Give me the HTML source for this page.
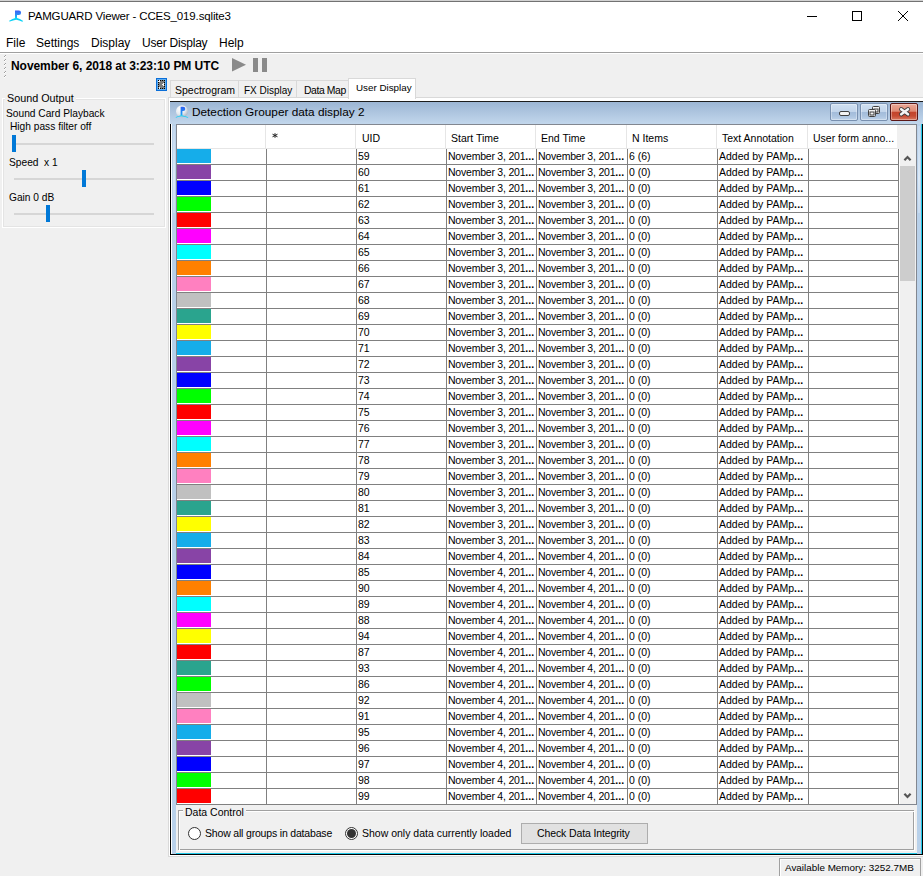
<!DOCTYPE html>
<html><head><meta charset="utf-8">
<style>
*{box-sizing:border-box;margin:0;padding:0}
html,body{width:923px;height:876px;overflow:hidden;background:#f0f0f0;font-family:"Liberation Sans",sans-serif;color:#000}
.a{position:absolute}
.t{position:absolute;white-space:nowrap;line-height:1}
#titlebar{left:0;top:0;width:923px;height:52px;background:#fff}
#menuline{left:0;top:52px;width:923px;height:1px;background:#a0a0a0}
.menu{font-size:12px;top:37px}
.ttl{font-size:11.5px}
.lp{font-size:10.2px}
.track{position:absolute;height:2px;background:#d6d6d6}
.thumb{position:absolute;width:4px;height:17px;background:#0078d7}
.tab{position:absolute;top:80px;height:18px;border:1px solid #d9d9d9;border-bottom:none;background:#f0f0f0;font-size:10.5px}
.tab span{position:absolute;top:4px;white-space:nowrap;line-height:1}
.btn{position:absolute;top:103px;width:28px;height:18px;border:1px solid #7890b0;border-radius:2px;box-shadow:inset 0 0 0 1px rgba(255,255,255,.35)}
.hs{position:absolute;top:125px;width:1px;height:23px;background:#e6e6e6}
.hd{font-size:10.5px;top:133px;margin-left:-1px}
#grid{border-collapse:separate;border-spacing:0;table-layout:fixed;width:722px;font-size:10.5px}
#grid td{height:16px;border-right:1px solid #808080;border-bottom:1px solid #808080;padding:0 0 0 1px;white-space:nowrap;overflow:hidden;line-height:15px;vertical-align:top;box-sizing:border-box}
#grid td i{display:block;width:34px;height:14px}
#grid td:first-child{padding:0}
#grid b{letter-spacing:0.1px}
#grid td:nth-child(4),#grid td:nth-child(5){letter-spacing:-0.22px}
.dc{font-size:10.5px}
.radio{width:13px;height:13px;border-radius:50%;border:1px solid #333;background:#fff}
</style></head><body>

<!-- title bar + menu -->
<div class="a" id="titlebar"></div>
<div class="a" style="left:0;top:0;width:923px;height:1px;background:#d2d2d2"></div>
<div class="a" style="left:0;top:1px;width:923px;height:1px;background:#727272"></div>
<svg class="a" style="left:5px;top:5px" width="22" height="22" viewBox="0 0 22 22">
  <defs><linearGradient id="pg" x1="0" y1="0" x2="0" y2="1"><stop offset="0" stop-color="#3a5ef6"/><stop offset=".55" stop-color="#2f8cf4"/><stop offset="1" stop-color="#08d6f6"/></linearGradient></defs>
  <path d="M10 5.4h3.8a2.3 2.3 0 0 1 0 4.6H12V13.2H10z" fill="url(#pg)"/>
  <path d="M3.8 15.9C6.5 14.6 8.6 13.6 10.4 13.1h1.6C13.8 13.6 16 14.6 18.2 15.9l-.9.8C15.2 15.8 13.2 15.1 11.2 14.7 9.2 15.1 7.2 15.8 4.8 16.6z" fill="#0ad2f6"/>
</svg>
<div class="t ttl" id="title" style="left:28px;top:11px;letter-spacing:-0.15px">PAMGUARD Viewer - CCES_019.sqlite3</div>
<div class="a" style="left:807px;top:16px;width:10px;height:1px;background:#000"></div>
<div class="a" style="left:852px;top:11px;width:10px;height:10px;border:1px solid #000"></div>
<svg class="a" style="left:897px;top:10px" width="12" height="12" viewBox="0 0 12 12"><path d="M1 1L11 11M11 1L1 11" stroke="#000" stroke-width="1"/></svg>

<div class="t menu" id="m1" style="left:6px">File</div>
<div class="t menu" id="m2" style="left:36px">Settings</div>
<div class="t menu" id="m3" style="left:91px">Display</div>
<div class="t menu" id="m4" style="left:142px;letter-spacing:-0.22px">User Display</div>
<div class="t menu" id="m5" style="left:219px">Help</div>
<div class="a" id="menuline"></div><div class="a" style="left:0;top:53px;width:923px;height:1px;background:#fff"></div>

<!-- toolbar -->
<svg class="a" style="left:3px;top:55px" width="4" height="24" shape-rendering="crispEdges"><rect x="2" y="0" width="1" height="1" fill="#a0a0a0"/><rect x="1" y="1" width="1" height="1" fill="#a0a0a0"/><rect x="2" y="1" width="1" height="1" fill="#fff"/><rect x="1" y="2" width="1" height="1" fill="#fff"/><rect x="2" y="4" width="1" height="1" fill="#a0a0a0"/><rect x="1" y="5" width="1" height="1" fill="#a0a0a0"/><rect x="2" y="5" width="1" height="1" fill="#fff"/><rect x="1" y="6" width="1" height="1" fill="#fff"/><rect x="2" y="8" width="1" height="1" fill="#a0a0a0"/><rect x="1" y="9" width="1" height="1" fill="#a0a0a0"/><rect x="2" y="9" width="1" height="1" fill="#fff"/><rect x="1" y="10" width="1" height="1" fill="#fff"/><rect x="2" y="12" width="1" height="1" fill="#a0a0a0"/><rect x="1" y="13" width="1" height="1" fill="#a0a0a0"/><rect x="2" y="13" width="1" height="1" fill="#fff"/><rect x="1" y="14" width="1" height="1" fill="#fff"/><rect x="2" y="16" width="1" height="1" fill="#a0a0a0"/><rect x="1" y="17" width="1" height="1" fill="#a0a0a0"/><rect x="2" y="17" width="1" height="1" fill="#fff"/><rect x="1" y="18" width="1" height="1" fill="#fff"/><rect x="2" y="20" width="1" height="1" fill="#a0a0a0"/><rect x="1" y="21" width="1" height="1" fill="#a0a0a0"/><rect x="2" y="21" width="1" height="1" fill="#fff"/><rect x="1" y="22" width="1" height="1" fill="#fff"/></svg>
<div class="t" id="date" style="left:11px;top:60px;font-size:12px;font-weight:bold;letter-spacing:-0.06px">November 6, 2018 at 3:23:10 PM UTC</div>
<svg class="a" style="left:231px;top:58px" width="38" height="14">
  <path d="M1 0L15 6.7L1 13.5z" fill="#8a8a8a"/>
  <rect x="22" y="0" width="5" height="14" fill="#8a8a8a"/>
  <rect x="31" y="0" width="5" height="14" fill="#8a8a8a"/>
</svg>

<!-- one touch expandable icon -->
<svg class="a" style="left:156px;top:78px" width="11" height="13" shape-rendering="crispEdges">
  <rect x="0" y="0" width="11" height="13" fill="#0a6ed8"/>
  <rect x="1" y="1" width="9" height="11" fill="#60aef2"/>
  <rect x="2" y="2" width="7" height="9" fill="#7c7c7c"/>
  <rect x="3" y="2" width="1" height="2" fill="#f4f4f4"/><rect x="2" y="3" width="1" height="1" fill="#f4f4f4"/>
  <rect x="3" y="9" width="1" height="2" fill="#f4f4f4"/>
  <path d="M8 5L6 6.5 8 8z" fill="#f8f8f8"/>
  <g fill="#000"><rect x="2" y="2" width="1" height="1"/><rect x="2" y="10" width="1" height="1"/><rect x="4" y="2" width="1" height="1"/><rect x="4" y="10" width="1" height="1"/><rect x="6" y="2" width="1" height="1"/><rect x="6" y="10" width="1" height="1"/><rect x="8" y="2" width="1" height="1"/><rect x="8" y="10" width="1" height="1"/><rect x="2" y="4" width="1" height="1"/><rect x="2" y="6" width="1" height="1"/><rect x="2" y="8" width="1" height="1"/><rect x="8" y="4" width="1" height="1"/><rect x="8" y="6" width="1" height="1"/><rect x="8" y="8" width="1" height="1"/></g>
</svg>
<!-- left panel: Sound Output -->
<div class="a" style="left:2px;top:98px;width:164px;height:130px;border:1px solid #fff"></div>
<div class="a" style="left:3px;top:99px;width:162px;height:128px;border:1px solid #e4e4e4"></div>
<div class="t lp" id="so" style="left:5px;top:93px;font-size:10.8px;background:#f0f0f0;padding:0 2px">Sound Output</div>
<div class="t lp" style="left:6px;top:109px">Sound Card Playback</div>
<div class="t lp" style="left:10px;top:122px">High pass filter off</div>
<div class="track" style="left:14px;top:143px;width:140px"></div>
<div class="thumb" style="left:12px;top:135px"></div>
<div class="t lp" style="left:9px;top:158px">Speed&nbsp; x 1</div>
<div class="track" style="left:14px;top:178px;width:140px"></div>
<div class="thumb" style="left:82px;top:170px"></div>
<div class="t lp" style="left:9px;top:193px">Gain 0 dB</div>
<div class="track" style="left:14px;top:213px;width:140px"></div>
<div class="thumb" style="left:46px;top:205px"></div>

<!-- tabs -->
<div class="tab" style="left:170px;width:69px"><span style="left:4px">Spectrogram</span></div>
<div class="tab" style="left:238px;width:59px"><span style="left:5px;font-size:10px;top:5px">FX Display</span></div>
<div class="tab" style="left:296px;width:53px"><span style="left:7px;font-size:10.4px;top:5px;letter-spacing:-0.4px">Data Map</span></div>
<!-- tab content area -->
<div class="a" style="left:168px;top:97px;width:760px;height:760px;border:1px solid #d9d9d9;background:#fff"></div>
<div class="tab" style="left:348px;top:78px;width:68px;height:21px;background:#fff"><span style="left:7px;top:4px;font-size:9.8px">User Display</span></div>


<!-- internal frame -->
<div class="a" style="left:170px;top:101px;width:753px;height:1px;background:#1c1c1c"></div>
<div class="a" style="left:170px;top:102px;width:753px;height:22px;background:linear-gradient(#9cb6d4,#c2d7ec)"></div>
<div class="a" style="left:170px;top:124px;width:1px;height:731px;background:#000"></div>
<div class="a" style="left:171px;top:124px;width:1px;height:730px;background:#fff"></div>
<div class="a" style="left:172px;top:124px;width:4px;height:730px;background:#b9d1ea"></div><div class="a" style="left:173px;top:126px;width:2px;height:87px;background:linear-gradient(#c4d8ee,#dce9f6 60%,#c9dbef)"></div>
<div class="a" style="left:171px;top:854px;width:752px;height:1px;background:#000"></div>
<div class="a" style="left:176px;top:853px;width:746px;height:1px;background:#1ec8e8"></div>
<div class="a" style="left:922px;top:124px;width:1px;height:731px;background:#000"></div>
<div class="a" style="left:921px;top:124px;width:1px;height:730px;background:#1ec8e8"></div>
<div class="a" style="left:917px;top:124px;width:4px;height:730px;background:#b9d1ea"></div><div class="a" style="left:918px;top:126px;width:2px;height:87px;background:linear-gradient(#c4d8ee,#dce9f6 60%,#c9dbef)"></div>
<div class="a" style="left:176px;top:124px;width:741px;height:729px;background:#f0f0f0"></div>
<svg class="a" style="left:175px;top:105px" width="14" height="13" viewBox="0 0 14 13">
  <defs><radialGradient id="sph" cx=".35" cy=".3" r=".75"><stop offset="0" stop-color="#ffffff"/><stop offset=".6" stop-color="#e4e9ef"/><stop offset="1" stop-color="#aab6c4"/></radialGradient>
  <linearGradient id="pg2" x1="0" y1="0" x2="0" y2="1"><stop offset="0" stop-color="#2f5ff2"/><stop offset="1" stop-color="#1aa8f4"/></linearGradient></defs>
  <circle cx="7" cy="6.3" r="6" fill="url(#sph)"/>
  <path d="M5.6 1.8h2.6a2.1 2.1 0 0 1 0 4.2H7.4V10.6H5.6z" fill="url(#pg2)"/>
  <path d="M0.6 12.2C3 11.2 5 10.4 6.5 10.2 8 10.4 10.5 11.2 13.4 12.2l-.6.6C10.5 12 8.5 11.5 6.5 11.3 4.5 11.5 2.5 12 1 12.8z" fill="#0bd0f8"/>
</svg>
<div class="t" id="ftitle" style="left:192px;top:107px;font-size:11.8px;color:#000">Detection Grouper data display 2</div>
<div class="btn" style="left:830px;background:linear-gradient(#d0e0f2 0,#c2d5eb 48%,#a3bcda 52%,#abc3df 75%,#bfd3ea 100%)"><div class="a" style="left:8px;top:7px;width:11px;height:5px;border:1px solid #404040;background:#f4f4f4;border-radius:2px"></div></div>
<div class="btn" style="left:860px;background:linear-gradient(#d0e0f2 0,#c2d5eb 48%,#a3bcda 52%,#abc3df 75%,#bfd3ea 100%)">
  <svg class="a" style="left:6px;top:1px" width="14" height="14" viewBox="0 0 14 14">
    <rect x="5.5" y="1.5" width="7" height="7" rx="1" fill="#f4f4f4" stroke="#404040"/>
    <rect x="7" y="4" width="4" height="3" fill="none" stroke="#404040"/>
    <rect x="1.5" y="4.5" width="7" height="7" rx="1" fill="#f4f4f4" stroke="#404040"/>
    <rect x="3" y="7" width="4" height="3" fill="none" stroke="#404040"/>
  </svg>
</div>
<div class="btn" style="left:890px;border-color:#5a1616;background:linear-gradient(#eaa897 0,#df8a74 45%,#c3442c 52%,#c64b33 75%,#d97b63 100%)">
  <svg class="a" style="left:7px;top:2px" width="14" height="12" viewBox="0 0 14 12"><path d="M3.2 3.2L10 8.3M10 3.2L3.2 8.3" stroke="#3a3a3a" stroke-width="4.2" stroke-linecap="round"/><path d="M3.2 3.2L10 8.3M10 3.2L3.2 8.3" stroke="#f4f4f4" stroke-width="2.6" stroke-linecap="round"/></svg>
</div>

<!-- table -->
<div class="a" style="left:176px;top:124px;width:741px;height:681px;border:1px solid #828790;background:#fff"></div>
<div class="a" id="hdr" style="left:177px;top:125px;width:720px;height:24px;background:#fff;border-bottom:1px solid #e6e6e6"></div>
<div class="a" style="left:897px;top:125px;width:19px;height:24px;background:#f0f0f0"></div>
<div class="hs" style="left:265px"></div><div class="hs" style="left:355px"></div><div class="hs" style="left:445px"></div><div class="hs" style="left:535px"></div><div class="hs" style="left:626px"></div><div class="hs" style="left:716px"></div><div class="hs" style="left:807px"></div>
<svg class="a" style="left:271px;top:132px" width="8" height="7" viewBox="0 0 8 7"><path d="M4 1.2V5.8M1.5 2.2L6.5 4.8M1.5 4.8L6.5 2.2" stroke="#222" stroke-width="1"/></svg>
<div class="t hd" id="h3" style="left:363px">UID</div>
<div class="t hd" id="h4" style="left:452px">Start Time</div>
<div class="t hd" id="h5" style="left:542px">End Time</div>
<div class="t hd" id="h6" style="left:633px">N Items</div>
<div class="t hd" id="h7" style="left:723px">Text Annotation</div>
<div class="t hd" id="h8" style="left:814px">User form anno...</div>
<table id="grid" class="a" style="left:177px;top:149px">
<colgroup><col style="width:90px"><col style="width:90px"><col style="width:90px"><col style="width:90px"><col style="width:91px"><col style="width:90px"><col style="width:91px"><col style="width:90px"></colgroup>
<tr><td><i style="background:#15adea"></i></td><td></td><td>59</td><td>November 3, 201<b>...</b></td><td>November 3, 201<b>...</b></td><td>6 (6)</td><td>Added by PAMp<b>...</b></td><td></td></tr>
<tr><td><i style="background:#8844a6"></i></td><td></td><td>60</td><td>November 3, 201<b>...</b></td><td>November 3, 201<b>...</b></td><td>0 (0)</td><td>Added by PAMp<b>...</b></td><td></td></tr>
<tr><td><i style="background:#0000ff"></i></td><td></td><td>61</td><td>November 3, 201<b>...</b></td><td>November 3, 201<b>...</b></td><td>0 (0)</td><td>Added by PAMp<b>...</b></td><td></td></tr>
<tr><td><i style="background:#00ff00"></i></td><td></td><td>62</td><td>November 3, 201<b>...</b></td><td>November 3, 201<b>...</b></td><td>0 (0)</td><td>Added by PAMp<b>...</b></td><td></td></tr>
<tr><td><i style="background:#ff0000"></i></td><td></td><td>63</td><td>November 3, 201<b>...</b></td><td>November 3, 201<b>...</b></td><td>0 (0)</td><td>Added by PAMp<b>...</b></td><td></td></tr>
<tr><td><i style="background:#ff00ff"></i></td><td></td><td>64</td><td>November 3, 201<b>...</b></td><td>November 3, 201<b>...</b></td><td>0 (0)</td><td>Added by PAMp<b>...</b></td><td></td></tr>
<tr><td><i style="background:#00ffff"></i></td><td></td><td>65</td><td>November 3, 201<b>...</b></td><td>November 3, 201<b>...</b></td><td>0 (0)</td><td>Added by PAMp<b>...</b></td><td></td></tr>
<tr><td><i style="background:#ff8000"></i></td><td></td><td>66</td><td>November 3, 201<b>...</b></td><td>November 3, 201<b>...</b></td><td>0 (0)</td><td>Added by PAMp<b>...</b></td><td></td></tr>
<tr><td><i style="background:#ff80c0"></i></td><td></td><td>67</td><td>November 3, 201<b>...</b></td><td>November 3, 201<b>...</b></td><td>0 (0)</td><td>Added by PAMp<b>...</b></td><td></td></tr>
<tr><td><i style="background:#c0c0c0"></i></td><td></td><td>68</td><td>November 3, 201<b>...</b></td><td>November 3, 201<b>...</b></td><td>0 (0)</td><td>Added by PAMp<b>...</b></td><td></td></tr>
<tr><td><i style="background:#2aa48e"></i></td><td></td><td>69</td><td>November 3, 201<b>...</b></td><td>November 3, 201<b>...</b></td><td>0 (0)</td><td>Added by PAMp<b>...</b></td><td></td></tr>
<tr><td><i style="background:#ffff00"></i></td><td></td><td>70</td><td>November 3, 201<b>...</b></td><td>November 3, 201<b>...</b></td><td>0 (0)</td><td>Added by PAMp<b>...</b></td><td></td></tr>
<tr><td><i style="background:#15adea"></i></td><td></td><td>71</td><td>November 3, 201<b>...</b></td><td>November 3, 201<b>...</b></td><td>0 (0)</td><td>Added by PAMp<b>...</b></td><td></td></tr>
<tr><td><i style="background:#8844a6"></i></td><td></td><td>72</td><td>November 3, 201<b>...</b></td><td>November 3, 201<b>...</b></td><td>0 (0)</td><td>Added by PAMp<b>...</b></td><td></td></tr>
<tr><td><i style="background:#0000ff"></i></td><td></td><td>73</td><td>November 3, 201<b>...</b></td><td>November 3, 201<b>...</b></td><td>0 (0)</td><td>Added by PAMp<b>...</b></td><td></td></tr>
<tr><td><i style="background:#00ff00"></i></td><td></td><td>74</td><td>November 3, 201<b>...</b></td><td>November 3, 201<b>...</b></td><td>0 (0)</td><td>Added by PAMp<b>...</b></td><td></td></tr>
<tr><td><i style="background:#ff0000"></i></td><td></td><td>75</td><td>November 3, 201<b>...</b></td><td>November 3, 201<b>...</b></td><td>0 (0)</td><td>Added by PAMp<b>...</b></td><td></td></tr>
<tr><td><i style="background:#ff00ff"></i></td><td></td><td>76</td><td>November 3, 201<b>...</b></td><td>November 3, 201<b>...</b></td><td>0 (0)</td><td>Added by PAMp<b>...</b></td><td></td></tr>
<tr><td><i style="background:#00ffff"></i></td><td></td><td>77</td><td>November 3, 201<b>...</b></td><td>November 3, 201<b>...</b></td><td>0 (0)</td><td>Added by PAMp<b>...</b></td><td></td></tr>
<tr><td><i style="background:#ff8000"></i></td><td></td><td>78</td><td>November 3, 201<b>...</b></td><td>November 3, 201<b>...</b></td><td>0 (0)</td><td>Added by PAMp<b>...</b></td><td></td></tr>
<tr><td><i style="background:#ff80c0"></i></td><td></td><td>79</td><td>November 3, 201<b>...</b></td><td>November 3, 201<b>...</b></td><td>0 (0)</td><td>Added by PAMp<b>...</b></td><td></td></tr>
<tr><td><i style="background:#c0c0c0"></i></td><td></td><td>80</td><td>November 3, 201<b>...</b></td><td>November 3, 201<b>...</b></td><td>0 (0)</td><td>Added by PAMp<b>...</b></td><td></td></tr>
<tr><td><i style="background:#2aa48e"></i></td><td></td><td>81</td><td>November 3, 201<b>...</b></td><td>November 3, 201<b>...</b></td><td>0 (0)</td><td>Added by PAMp<b>...</b></td><td></td></tr>
<tr><td><i style="background:#ffff00"></i></td><td></td><td>82</td><td>November 3, 201<b>...</b></td><td>November 3, 201<b>...</b></td><td>0 (0)</td><td>Added by PAMp<b>...</b></td><td></td></tr>
<tr><td><i style="background:#15adea"></i></td><td></td><td>83</td><td>November 3, 201<b>...</b></td><td>November 3, 201<b>...</b></td><td>0 (0)</td><td>Added by PAMp<b>...</b></td><td></td></tr>
<tr><td><i style="background:#8844a6"></i></td><td></td><td>84</td><td>November 4, 201<b>...</b></td><td>November 4, 201<b>...</b></td><td>0 (0)</td><td>Added by PAMp<b>...</b></td><td></td></tr>
<tr><td><i style="background:#0000ff"></i></td><td></td><td>85</td><td>November 4, 201<b>...</b></td><td>November 4, 201<b>...</b></td><td>0 (0)</td><td>Added by PAMp<b>...</b></td><td></td></tr>
<tr><td><i style="background:#ff8000"></i></td><td></td><td>90</td><td>November 4, 201<b>...</b></td><td>November 4, 201<b>...</b></td><td>0 (0)</td><td>Added by PAMp<b>...</b></td><td></td></tr>
<tr><td><i style="background:#00ffff"></i></td><td></td><td>89</td><td>November 4, 201<b>...</b></td><td>November 4, 201<b>...</b></td><td>0 (0)</td><td>Added by PAMp<b>...</b></td><td></td></tr>
<tr><td><i style="background:#ff00ff"></i></td><td></td><td>88</td><td>November 4, 201<b>...</b></td><td>November 4, 201<b>...</b></td><td>0 (0)</td><td>Added by PAMp<b>...</b></td><td></td></tr>
<tr><td><i style="background:#ffff00"></i></td><td></td><td>94</td><td>November 4, 201<b>...</b></td><td>November 4, 201<b>...</b></td><td>0 (0)</td><td>Added by PAMp<b>...</b></td><td></td></tr>
<tr><td><i style="background:#ff0000"></i></td><td></td><td>87</td><td>November 4, 201<b>...</b></td><td>November 4, 201<b>...</b></td><td>0 (0)</td><td>Added by PAMp<b>...</b></td><td></td></tr>
<tr><td><i style="background:#2aa48e"></i></td><td></td><td>93</td><td>November 4, 201<b>...</b></td><td>November 4, 201<b>...</b></td><td>0 (0)</td><td>Added by PAMp<b>...</b></td><td></td></tr>
<tr><td><i style="background:#00ff00"></i></td><td></td><td>86</td><td>November 4, 201<b>...</b></td><td>November 4, 201<b>...</b></td><td>0 (0)</td><td>Added by PAMp<b>...</b></td><td></td></tr>
<tr><td><i style="background:#c0c0c0"></i></td><td></td><td>92</td><td>November 4, 201<b>...</b></td><td>November 4, 201<b>...</b></td><td>0 (0)</td><td>Added by PAMp<b>...</b></td><td></td></tr>
<tr><td><i style="background:#ff80c0"></i></td><td></td><td>91</td><td>November 4, 201<b>...</b></td><td>November 4, 201<b>...</b></td><td>0 (0)</td><td>Added by PAMp<b>...</b></td><td></td></tr>
<tr><td><i style="background:#15adea"></i></td><td></td><td>95</td><td>November 4, 201<b>...</b></td><td>November 4, 201<b>...</b></td><td>0 (0)</td><td>Added by PAMp<b>...</b></td><td></td></tr>
<tr><td><i style="background:#8844a6"></i></td><td></td><td>96</td><td>November 4, 201<b>...</b></td><td>November 4, 201<b>...</b></td><td>0 (0)</td><td>Added by PAMp<b>...</b></td><td></td></tr>
<tr><td><i style="background:#0000ff"></i></td><td></td><td>97</td><td>November 4, 201<b>...</b></td><td>November 4, 201<b>...</b></td><td>0 (0)</td><td>Added by PAMp<b>...</b></td><td></td></tr>
<tr><td><i style="background:#00ff00"></i></td><td></td><td>98</td><td>November 4, 201<b>...</b></td><td>November 4, 201<b>...</b></td><td>0 (0)</td><td>Added by PAMp<b>...</b></td><td></td></tr>
<tr><td><i style="background:#ff0000"></i></td><td></td><td>99</td><td>November 4, 201<b>...</b></td><td>November 4, 201<b>...</b></td><td>0 (0)</td><td>Added by PAMp<b>...</b></td><td></td></tr>
</table>
<!-- scrollbar -->
<div class="a" style="left:899px;top:149px;width:17px;height:655px;background:#f0f0f0;border-left:1px solid #fff"></div>
<div class="a" style="left:900px;top:166px;width:15px;height:115px;background:#cdcdcd"></div>
<svg class="a" style="left:903px;top:154px" width="9" height="8" viewBox="0 0 9 8"><path d="M1.4 6.3L4.5 3 7.6 6.3" fill="none" stroke="#555" stroke-width="2.2"/></svg>
<svg class="a" style="left:903px;top:792px" width="9" height="8" viewBox="0 0 9 8"><path d="M1.4 1.7L4.5 5 7.6 1.7" fill="none" stroke="#555" stroke-width="2.2"/></svg>

<!-- data control -->
<div class="a" style="left:178px;top:810px;width:736px;height:40px;border:1px solid #a0a0a0"></div>
<div class="a" style="left:179px;top:811px;width:736px;height:40px;border:1px solid #fff"></div>
<div class="t dc" id="dct" style="left:183px;top:807px;background:#f0f0f0;padding:0 2px">Data Control</div>
<div class="a radio" style="left:188px;top:827px"></div>
<div class="t dc" id="r1" style="left:205px;top:828px;letter-spacing:-0.18px">Show all groups in database</div>
<div class="a radio" style="left:345px;top:827px"><div class="a" style="left:1px;top:1px;width:9px;height:9px;border-radius:50%;background:#333"></div></div>
<div class="t dc" id="r2" style="left:362px;top:828px">Show only data currently loaded</div>
<div class="a" style="left:521px;top:823px;width:127px;height:21px;background:#e1e1e1;border:1px solid #adadad"></div>
<div class="t dc" id="cdi" style="left:537px;top:828px;letter-spacing:-0.12px">Check Data Integrity</div>

<!-- status bar -->
<div class="a" style="left:779px;top:858px;width:142px;height:20px;border:1px solid #a0a0a0;border-right-color:#a0a0a0"></div>
<div class="a" style="left:780px;top:859px;width:140px;height:18px;border-left:1px solid #fff;border-top:1px solid #fff"></div>
<div class="t dc" id="mem" style="left:785px;top:863px;font-size:9.9px">Available Memory: 3252.7MB</div>
</body></html>
